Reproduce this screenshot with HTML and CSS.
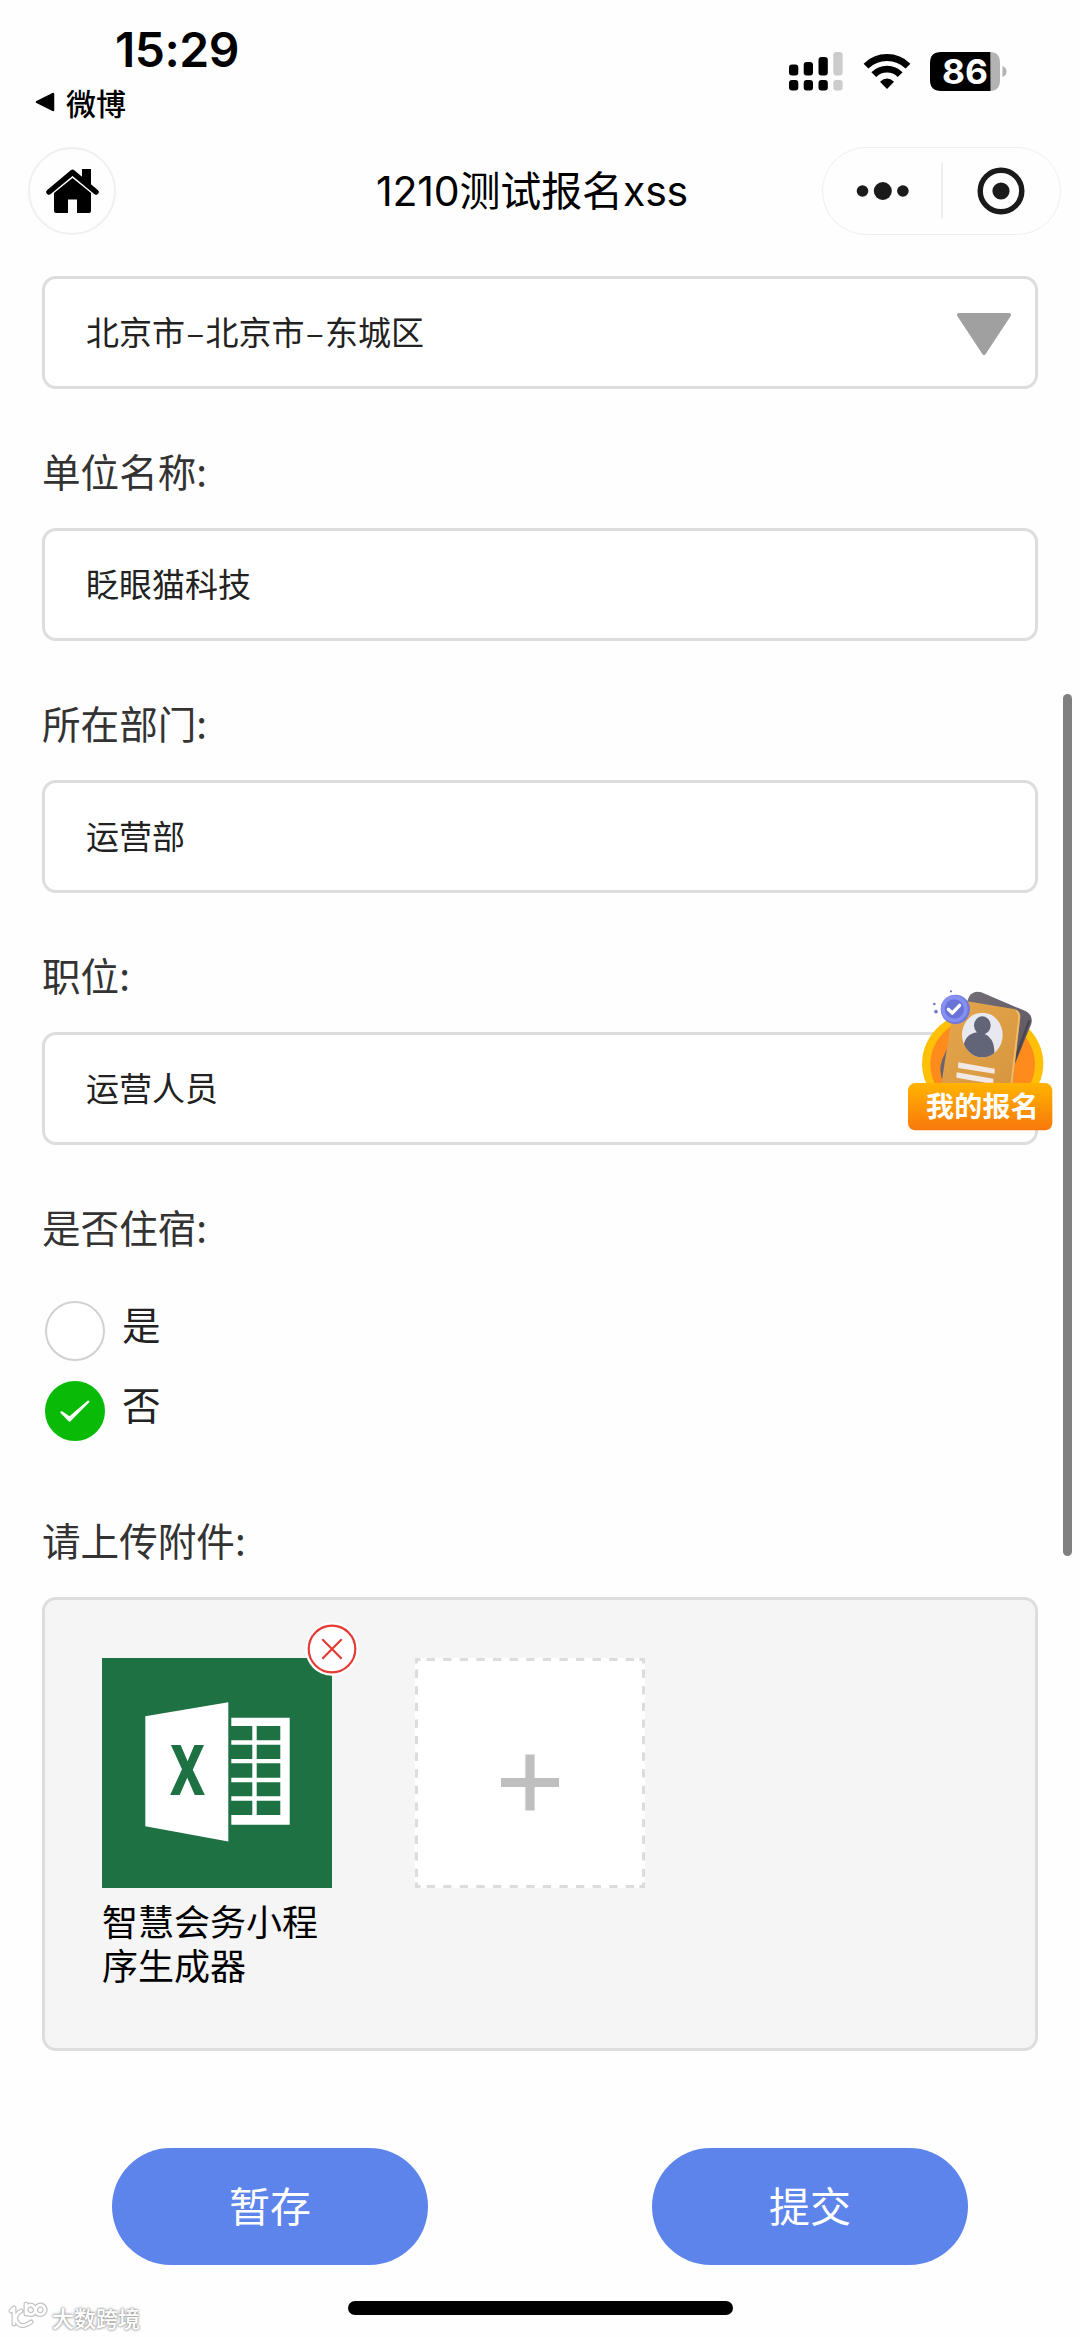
FILE: index.html
```html
<!DOCTYPE html>
<html lang="zh-CN">
<head>
<meta charset="utf-8">
<title>1210测试报名xss</title>
<link rel="stylesheet" href="styles.css">
</head>
<body>
<div class="screen">
  <header class="status">
    <div class="status-left">
      <div class="clock">15:29</div>
      <div class="back-app">
        <svg class="back-arrow" width="20" height="20" viewBox="0 0 20 20"><path d="M2 10 L18 2 V18 Z" fill="#000" stroke="#000" stroke-width="2.5" stroke-linejoin="round"/></svg>
        <span>微博</span>
      </div>
    </div>
    <div class="status-icons">
      <svg width="54" height="39" viewBox="0 0 54 39">
        <g fill="#000"><rect x="0" y="12.5" width="9.3" height="11" rx="3"/><rect x="14.7" y="10" width="9.3" height="13.5" rx="3"/><rect x="29.5" y="5" width="9.3" height="18.5" rx="3"/><rect x="0" y="28" width="9.3" height="10.5" rx="3"/><rect x="14.7" y="28" width="9.3" height="10.5" rx="3"/><rect x="29.5" y="28" width="9.3" height="10.5" rx="3"/></g>
        <g fill="#ccc"><rect x="44.3" y="0" width="9.3" height="23.5" rx="3"/><rect x="44.3" y="28" width="9.3" height="10.5" rx="3"/></g>
      </svg>
      <svg class="wifi" width="46" height="36" viewBox="0 0 46 36">
        <g fill="none" stroke="#000" stroke-width="6.8"><path d="M2 12.1 A30 30 0 0 1 44 12.1"/><path d="M9.8 20.6 A18.6 18.6 0 0 1 36.2 20.6"/></g>
        <path d="M16 27.8 Q23 21.4 30 27.8 L23 35 Z" fill="#000"/>
      </svg>
      <svg class="battery" width="77" height="39" viewBox="0 0 77 39">
        <path d="M61 0 H60 Q70 0 70 11 V28 Q70 39 60 39 Z" fill="#b3b3b3"/>
        <path d="M11 0 H60.5 V39 H11 Q0 39 0 28 V11 Q0 0 11 0 Z" fill="#000"/>
        <path d="M72.5 14 Q76.5 15.5 76.5 19.5 Q76.5 23.500 72.5 25 Z" fill="#b3b3b3"/>
        <text class="battery-level" x="35" y="32" text-anchor="middle" textLength="46" lengthAdjust="spacingAndGlyphs">86</text>
      </svg>
    </div>
  </header>

  <nav class="nav">
    <div class="home">
      <svg width="53" height="46" viewBox="0 0 53 46">
        <path d="M36 1 H45 V19 L36 11 Z"/>
        <path d="M3 24 L26.500 4.300 L50 24" fill="none" stroke="#000" stroke-width="5.500" stroke-linecap="round" stroke-linejoin="round"/>
        <path d="M8 25 L26.500 10 L45 25 V43 Q45 45 43 45 H31 V31.500 H22 V45 H10 Q8 45 8 43 Z"/>
      </svg>
    </div>
    <h1 class="title">1210测试报名xss</h1>
    <div class="capsule">
      <svg width="54" height="20" viewBox="0 0 54 20" fill="#1a1a1a"><circle cx="6.500" cy="10" r="5.800"/><circle cx="26.800" cy="10" r="9"/><circle cx="46.900" cy="10" r="5.800"/></svg>
      <span class="divider"></span>
      <svg width="48" height="48" viewBox="0 0 48 48"><circle cx="24" cy="24" r="20.800" fill="none" stroke="#1a1a1a" stroke-width="5.400"/><circle cx="24" cy="24" r="8.600" fill="#1a1a1a"/></svg>
    </div>
  </nav>

  <main class="form">
    <div class="field select">
      <span>北京市<span class="dash">–</span>北京市<span class="dash">–</span>东城区</span>
      <svg class="caret" width="54" height="42" viewBox="0 0 54 42"><path d="M2 2 H52 L27 40 Z" fill="#a0a0a0" stroke="#a0a0a0" stroke-width="4" stroke-linejoin="round"/></svg>
    </div>
    <div class="label">单位名称:</div>
    <div class="field">眨眼猫科技</div>
    <div class="label">所在部门:</div>
    <div class="field">运营部</div>
    <div class="label">职位:</div>
    <div class="field">运营人员</div>
    <div class="label">是否住宿:</div>
    <div class="radios">
      <div class="radio"><span class="dot"></span><span class="radio-text">是</span></div>
      <div class="radio"><span class="dot dot-on"><svg width="32" height="24" viewBox="0 0 32 24"><path d="M1.200 13.400 Q1.500 11.500 3.500 12.500 L10.500 17.200 L28.500 1.700 Q30.600 .8 30.500 3 L11.500 22.200 Q10.500 23 9.400 22 Z" fill="#fff"/></svg></span><span class="radio-text">否</span></div>
    </div>
    <div class="label">请上传附件:</div>
    <section class="upload">
      <div class="file">
        <svg class="thumb" width="230" height="230" viewBox="0 0 230 230">
          <rect width="230" height="230" fill="#1e7143"/>
          <path d="M43.300 58.300 L126.300 44.300 V183.600 L43.300 168.300 Z" fill="#fff"/>
          <path fill="#fff" fill-rule="evenodd" d="M129.300 59.700H187.700V166.700H129.300V157H150.300V142.700H129.300V138.300H150.300V124.300H129.300V119.700H150.300V105.300H129.300V101H150.300V86.700H129.300V82.300H150.300V68H129.300Z M154.700 68V82.300H178.300V68Z M154.700 86.700V101H178.300V86.700Z M154.700 105.300V119.700H178.300V105.300Z M154.700 124.300V138.300H178.300V124.300Z M154.700 142.700V157H178.300V142.700Z"/>
          <text class="sheet-letter" x="69.500" y="136" textLength="32" lengthAdjust="spacingAndGlyphs">X</text>
        </svg>
        <svg class="remove" width="54" height="54" viewBox="0 0 54 54"><circle cx="27" cy="27" r="26.700" fill="#fff"/><circle cx="27" cy="27" r="23.300" fill="none" stroke="#e53b35" stroke-width="2.200"/><path d="M17.300 17.300 L36.700 36.700 M36.700 17.300 L17.300 36.700" stroke="#e53b35" stroke-width="2.200"/></svg>
        <div class="file-name">智慧会务小程序生成器</div>
      </div>
      <svg class="add" width="230" height="230" viewBox="0 0 230 230">
        <rect width="230" height="230" fill="#fff"/>
        <g stroke="#dcdcdc" stroke-width="3" fill="none">
          <path stroke-dasharray="8.300 8.300" d="M11.600 1.500H219 M11.600 228.500H219 M1.500 11.600V219 M228.500 11.600V219"/>
          <path d="M1.500 5.500V1.500H5.500 M224.500 1.500H228.500V5.500 M228.500 224.500V228.500H224.500 M5.500 228.500H1.500V224.500"/>
        </g>
        <path d="M86 124.500H144 M115 96.500V152.500" stroke="#bfbfbf" stroke-width="9.200"/>
      </svg>
    </section>
    <div class="actions">
      <div class="btn">暂存</div>
      <div class="btn">提交</div>
    </div>
  </main>

  <svg class="my-badge" width="150" height="145" viewBox="75 80 450 435">
    <defs>
      <linearGradient id="ribbon" x1="0" y1="0" x2="0" y2="1"><stop offset="0" stop-color="#ffb400"/><stop offset="1" stop-color="#f9780c"/></linearGradient>
      <linearGradient id="card" x1="0" y1="0" x2="1" y2="1"><stop offset="0" stop-color="#e6a64d"/><stop offset="1" stop-color="#d6963f"/></linearGradient>
      <linearGradient id="back" x1="0" y1="0" x2="1" y2="1"><stop offset="0" stop-color="#77717b"/><stop offset="1" stop-color="#57535e"/></linearGradient>
      <clipPath id="face"><ellipse cx="307" cy="224" rx="61" ry="67"/></clipPath>
    </defs>
    <ellipse cx="308" cy="310" rx="182" ry="162" fill="#ffc107"/>
    <ellipse cx="308" cy="312" rx="157" ry="144" fill="#ff8b1c"/>
    <path d="M268 108 Q280 90 304 96 L438 153 Q460 166 454 190 L400 322 L340 370 H190 Q174 330 186 300 Z" fill="url(#back)"/>
    <path d="M448 180 L404 302" stroke="#474450" stroke-width="7"/>
    <path d="M210 205 L234 124 Q240 120 256 122 L402 146 Q423 152 421 172 L398 372 H184 Z" fill="url(#card)"/>
    <path d="M408 150 Q419 158 417 174 L394 372" fill="none" stroke="#f3bc6c" stroke-width="5"/>
    <ellipse cx="307" cy="224" rx="61" ry="67" fill="#e8e8f0"/>
    <g clip-path="url(#face)" fill="#626477"><path d="M249 270 Q251 222 290 216 Q340 219 343 270 L343 300 H249 Z"/><ellipse cx="307" cy="195" rx="25" ry="27"/></g>
    <path d="M235 306 L344 325 V340 L234 323 Z M230 336 L340 355 V367 H318 L229 352 Z" fill="#f2e9e5"/>
    <circle cx="226" cy="147" r="44" fill="#7078dc"/><circle cx="223" cy="145" r="40" fill="#8590f2"/><circle cx="223" cy="146" r="29" fill="#6872d7"/>
    <path d="M205 147 L217 158 L239 135" fill="none" stroke="#fff" stroke-width="10" stroke-linecap="round" stroke-linejoin="round"/>
    <g fill="#7777c9"><circle cx="213" cy="93" r="3.500"/><circle cx="163" cy="131" r="4"/><circle cx="168" cy="154" r="5.500"/></g>
    <rect x="84" y="368" width="433" height="142" rx="22" fill="url(#ribbon)"/>
    <text class="badge-text" x="138" y="470" textLength="338">我的报名</text>
  </svg>
  <span class="scrollbar"></span>
  <span class="home-bar"></span>
  <div class="watermark">
    <svg width="40" height="30" viewBox="0 0 40 30"><g fill="none" stroke-linecap="round" stroke-linejoin="round"><path d="M3 9 L6 6 V22 M13 9 Q7 12 8 18 Q12 28 23 20 M18 2 V12 M22 3 A4.800 4.800 0 1 0 27 10 Q28 3 33 3 A4.800 4.800 0 1 1 28 10 Q27 3 22 3" stroke="#c4c4c4" stroke-width="5"/><path d="M3 9 L6 6 V22 M13 9 Q7 12 8 18 Q12 28 23 20 M18 2 V12 M22 3 A4.800 4.800 0 1 0 27 10 Q28 3 33 3 A4.800 4.800 0 1 1 28 10 Q27 3 22 3" stroke="#fff" stroke-width="2.600"/></g></svg>
    <span>大数跨境</span>
  </div>
</div>
</body>
</html>
```
FILE: styles.css
```css
* { box-sizing: border-box; }
body { margin: 0; background: #fefefe; }
svg { display: block; flex: none; overflow: visible; }

.screen {
  position: relative;
  width: 1080px;
  height: 2337px;
  overflow: hidden;
  background: #fefefe;
  color: #222;
  font-family: "Noto Sans CJK SC", sans-serif;
}

/* status bar */
.status {
  display: flex;
  justify-content: space-between;
  height: 147px;
  padding: 22px 73px 0 35px;
  color: #000;
}
.clock {
  height: 56px;
  padding-left: 80px;
  font: 600 48px/56px Inter, sans-serif;
  letter-spacing: -0.5px;
}
.back-app {
  display: flex;
  align-items: center;
  gap: 11px;
  height: 48px;
  font-size: 30px;
  line-height: 48px;
  font-weight: 500;
}
.status-icons { display: flex; align-items: flex-start; padding-top: 30px; }
.wifi { margin: 2px 0 0 21px; }
.battery { margin-left: 20px; }
.battery-level { font: 700 34px Inter, sans-serif; fill: #fff; }

/* navigation */
.nav {
  display: flex;
  align-items: center;
  justify-content: space-between;
  height: 88px;
  padding: 0 19px 0 28px;
}
.home {
  display: flex;
  align-items: center;
  justify-content: center;
  width: 88px;
  height: 88px;
  border: 2px solid #f0f0f0;
  border-radius: 50%;
}
.title {
  margin: 0 0 0 126px;
  color: #000;
  font: 400 41px/60px Inter, "Noto Sans CJK SC", sans-serif;
  letter-spacing: -0.15px;
  white-space: nowrap;
}
.capsule {
  display: flex;
  align-items: center;
  width: 239px;
  height: 88px;
  padding-left: 33px;
  border: 1px solid #efefef;
  border-radius: 44px;
}
.divider { width: 2px; height: 56px; margin: 0 34px 0 31px; background: #efefef; }

/* form */
.form { padding: 41px 42px 0; }
.field {
  display: flex;
  align-items: center;
  height: 113px;
  padding: 0 24px 4px 41px;
  border: 3px solid #ddd;
  border-radius: 14px;
  background: #fff;
  font-size: 33px;
  line-height: 48px;
}
.select { justify-content: space-between; }
.caret { margin-top: 7px; }
.dash { display: inline-block; width: 20.500px; text-align: center; }
.label {
  height: 139px;
  padding-top: 51px;
  color: #333;
  font-size: 38.600px;
  line-height: 60px;
}
.radios { display: grid; gap: 20px; padding: 17px 0 0 3px; }
.radio { display: flex; height: 60px; gap: 17px; }
.dot {
  display: flex;
  align-items: center;
  justify-content: center;
  width: 60px;
  height: 60px;
  border: 2px solid #d1d1d1;
  border-radius: 50%;
  background: #fff;
}
.dot-on { border-color: #09bb07; background: #09bb07; }
.radio-text { height: 60px; font-size: 38.600px; line-height: 44px; }
.radios + .label { height: 156px; padding-top: 68px; }

.upload {
  display: flex;
  gap: 82px;
  height: 454px;
  padding: 58px 57px 0;
  border: 3px solid #ddd;
  border-radius: 14px;
  background: #f5f5f5;
}
.file { position: relative; width: 231px; }
.remove { position: absolute; left: 203px; top: -36px; }
.sheet-letter {
  font: 700 66px "Open Sans", sans-serif;
  fill: #1e7143;
  stroke: #1e7143;
  stroke-width: 2px;
}
.file-name { margin-top: 10px; color: #000; font-size: 36px; line-height: 44.300px; }

.actions { display: flex; justify-content: space-between; padding: 97px 70px 0; }
.btn {
  width: 316px;
  height: 117px;
  border-radius: 59px;
  background: #5d84eb;
  color: #fff;
  font-size: 41px;
  line-height: 112px;
  text-align: center;
}

/* floating layers */
.my-badge { position: absolute; left: 905px; top: 986.500px; }
.badge-text { font: 700 84px "Noto Sans CJK SC", sans-serif; fill: #fff; }
.scrollbar {
  position: absolute;
  left: 1063px;
  top: 694px;
  width: 9px;
  height: 862px;
  border-radius: 5px;
  background: #808080;
}
.home-bar {
  position: absolute;
  left: 348px;
  top: 2301px;
  width: 385px;
  height: 14px;
  border-radius: 7px;
  background: #000;
}
.watermark {
  position: absolute;
  left: 8px;
  top: 2302px;
  display: flex;
  gap: 4px;
  color: #fff;
  font-size: 22px;
  line-height: 30px;
  font-weight: 500;
  text-shadow: 0 0 2px #999, 0 0 3px #aaa, 0 0 3px #bbb;
}
```
